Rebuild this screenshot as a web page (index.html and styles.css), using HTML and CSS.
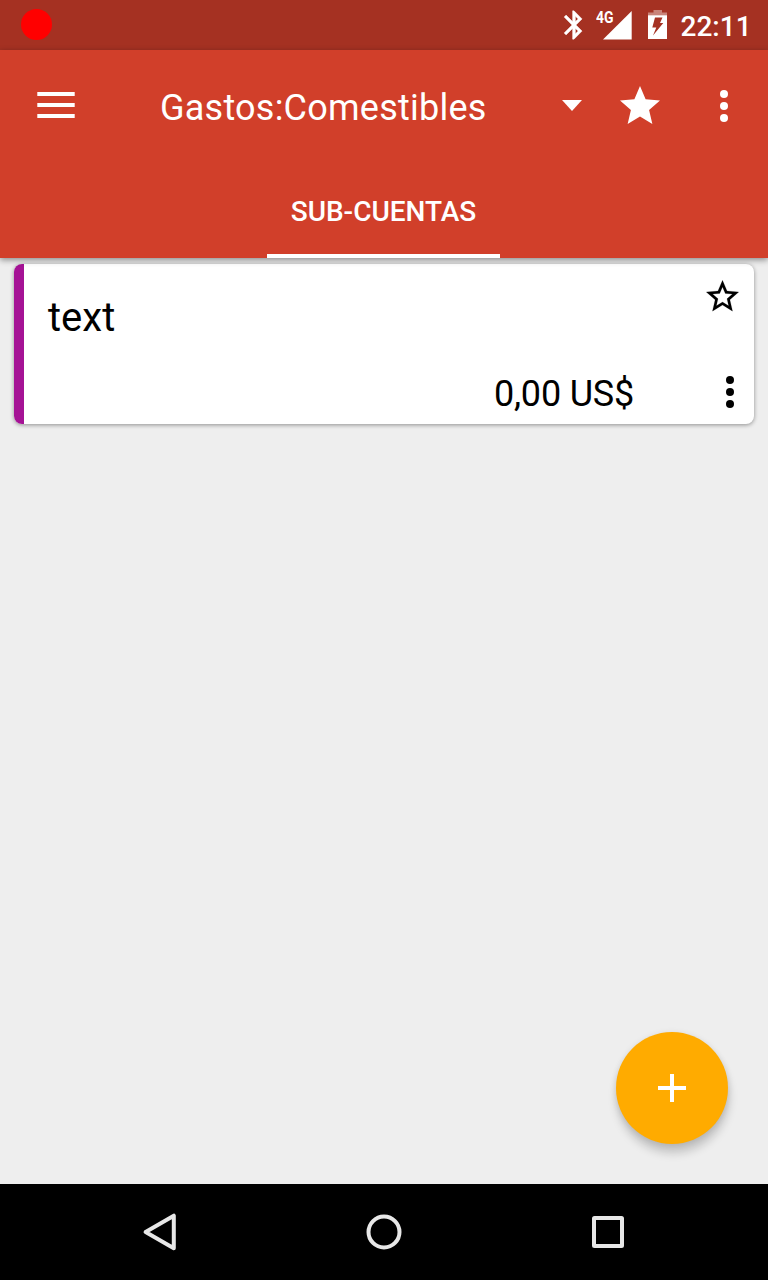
FILE: index.html
```html
<!DOCTYPE html>
<html lang="es">
<head>
<meta charset="utf-8">
<title>Gastos:Comestibles</title>
<link rel="stylesheet" href="styles.css">
</head>
<body>
<div class="screen">
  <div class="status-bar">
    <span class="record-dot"></span>
    <div class="status-icons">
      <svg class="bluetooth" width="34" height="34" viewBox="0 0 24 24"><path fill="#fff" stroke="#fff" stroke-width=".3" d="M17.71 7.71L12 2h-1v7.59L6.41 5 5 6.41 10.59 12 5 17.59 6.41 19 11 14.41V22h1l5.71-5.71-4.3-4.29 4.3-4.29zM13 5.83l1.88 1.88L13 9.59V5.83zm1.88 10.46L13 18.17v-3.76l1.88 1.88z"/></svg>
      <div class="signal">
        <span class="signal-label">4G</span>
        <svg width="29" height="29" viewBox="0 0 29 29"><path fill="#fff" d="M28.7 0v28.5H0z"/></svg>
      </div>
      <svg class="battery" width="19" height="30" viewBox="0 0 19 30"><path fill="#c98379" d="M5.500 0h8.500v2.500h5V5.500H0V2.500h5.500z"/><path fill="#fff" fill-rule="evenodd" d="M0 5.300h19V29H0zM7 7.500h7.500L12 13h3.300L5 25.500l3.300-8H4.300z"/></svg>
      <span class="clock">22:11</span>
    </div>
  </div>

  <header class="app-bar">
    <div class="toolbar">
      <svg class="menu" width="38" height="26" viewBox="0 0 38 26"><path fill="#fff" d="M.3 0h37.400v4H.3zM.3 11h37.400v4H.3zM.3 22h37.400v4H.3z"/></svg>
      <h1 class="title">Gastos:Comestibles</h1>
      <svg class="dropdown" width="20" height="11" viewBox="0 0 20 11"><path fill="#fff" d="M0 0h20L10 11z"/></svg>
      <svg class="star" width="48" height="48" viewBox="0 0 24 24"><path fill="#fff" d="M12 17.270L18.180 21l-1.640-7.030L22 9.240l-7.190-.610L12 2 9.190 8.630 2 9.240l5.460 4.730L5.820 21z"/></svg>
      <svg class="overflow" width="8" height="32" viewBox="0 0 8 32" fill="#fff"><circle cx="4" cy="4" r="4"/><circle cx="4" cy="16" r="4"/><circle cx="4" cy="28" r="4"/></svg>
    </div>
    <nav class="tabs"><span class="tab">SUB-CUENTAS</span></nav>
  </header>

  <main class="content">
    <article class="card">
      <div class="card-color"></div>
      <div class="card-text">
        <span class="account-name">text</span>
        <span class="balance">0,00 US$</span>
      </div>
      <div class="card-actions">
        <svg width="39" height="39" viewBox="0 0 24 24"><path stroke="#000" stroke-width=".1" d="M22 9.240l-7.190-.62L12 2 9.190 8.630 2 9.240l5.460 4.730L5.820 21 12 17.270 18.180 21l-1.630-7.030L22 9.240zM12 15.400l-3.760 2.270 1-4.280-3.320-2.880 4.380-.38L12 6.100l1.710 4.040 4.380.38-3.320 2.880 1 4.280L12 15.400z"/></svg>
        <svg class="card-overflow" width="8" height="32" viewBox="0 0 8 32"><circle cx="4" cy="4" r="4"/><circle cx="4" cy="16" r="4"/><circle cx="4" cy="28" r="4"/></svg>
      </div>
    </article>
    <div class="fab"><svg width="28" height="28" viewBox="0 0 28 28"><path fill="#fff" d="M12 0h4v12h12v4H16v12h-4V16H0v-4h12z"/></svg></div>
  </main>

  <footer class="nav-bar">
    <svg width="40" height="40" viewBox="0 0 40 40"><path d="M5.600 20L33.800 3.700v32.600z"/></svg>
    <svg width="40" height="40" viewBox="0 0 40 40"><circle cx="20" cy="20" r="15.500"/></svg>
    <svg width="40" height="40" viewBox="0 0 40 40"><rect x="6" y="6" width="28" height="28" rx=".5"/></svg>
  </footer>
</div>
</body>
</html>
```

FILE: styles.css
```css
* { box-sizing: border-box; }
body { margin: 0; font-family: Roboto, sans-serif; }
svg { display: block; flex: none; }

.screen {
  display: flex;
  flex-direction: column;
  width: 768px;
  height: 1280px;
  overflow: hidden;
  background: #eee;
}

.status-bar {
  display: flex;
  justify-content: space-between;
  height: 50px;
  padding: 0 0 0 20.500px;
  background: #a53122;
  color: #fff;
}
.record-dot {
  width: 31px;
  height: 31px;
  margin-top: 9.300px;
  border-radius: 50%;
  background: #f00;
}
.status-icons { display: flex; align-items: flex-start; }
.bluetooth { margin: 8px 5px 0 0; }
.signal {
  position: relative;
  width: 36px;
  margin: 11px 16px 0 0;
}
.signal svg { margin-left: 7px; }
.signal-label {
  position: absolute;
  left: 0;
  top: -2px;
  font-size: 17px;
  line-height: 17px;
  font-weight: 700;
  transform: scaleX(.82);
  transform-origin: left;
}
.battery { margin: 10px 13.500px 0 0; }
.clock {
  width: 87.500px;
  font-size: 28px;
  font-weight: 500;
  line-height: 34px;
  margin-top: 10px;
}

.app-bar {
  position: relative;
  z-index: 1;
  height: 208px;
  background: #d13f2a;
  color: #fff;
  box-shadow: 0 2px 6px rgba(0, 0, 0, .42);
}
.toolbar {
  display: flex;
  align-items: center;
  height: 112px;
  padding: 0 40px 0 37px;
}
.menu { margin-bottom: 2px; }
.title {
  flex: 1;
  margin: 3px 0 0 85px;
  font-size: 36px;
  line-height: 42px;
  font-weight: 400;
  letter-spacing: .24px;
  white-space: nowrap;
}
.dropdown { margin: 0 34px 1px 0; }
.star { margin-right: 56px; }
.tabs { display: flex; justify-content: center; height: 96px; padding-right: 1px; }
.tab {
  width: 233px;
  border-bottom: 4px solid #fff;
  text-align: center;
  font-size: 28px;
  font-weight: 500;
  line-height: 100px;
}

.content { position: relative; flex: 1; padding: 6px 14px; }
.card {
  display: flex;
  height: 160px;
  border-radius: 8px;
  overflow: hidden;
  background: #fff;
  color: #000;
  box-shadow: 0 1px 4px rgba(0, 0, 0, .4);
}
.card-color { width: 10px; background: #a51295; }
.card-text {
  display: flex;
  flex: 1;
  flex-direction: column;
  justify-content: space-between;
  padding: 30px 0 9px 24px;
}
.account-name { font-size: 40px; line-height: 47px; }
.balance {
  align-self: flex-end;
  font-size: 36px;
  line-height: 42px;
  letter-spacing: -.2px;
}
.card-actions {
  display: flex;
  flex-direction: column;
  align-items: flex-end;
  justify-content: space-between;
  width: 120px;
  padding: 12.500px 12.500px 16px 0;
}
.card-overflow { margin-right: 7.500px; }

.fab {
  position: absolute;
  right: 40px;
  bottom: 40px;
  display: flex;
  align-items: center;
  justify-content: center;
  width: 112px;
  height: 112px;
  border-radius: 50%;
  background: #ffab00;
  box-shadow: 1px 9px 10px rgba(0, 0, 0, .18), 0 1px 6px rgba(0, 0, 0, .1);
}

.nav-bar {
  display: flex;
  align-items: center;
  justify-content: center;
  gap: 184px;
  height: 96px;
  background: #000;
}
.nav-bar svg {
  fill: none;
  stroke: #e8e8e8;
  stroke-width: 4;
  stroke-linejoin: round;
}
```
